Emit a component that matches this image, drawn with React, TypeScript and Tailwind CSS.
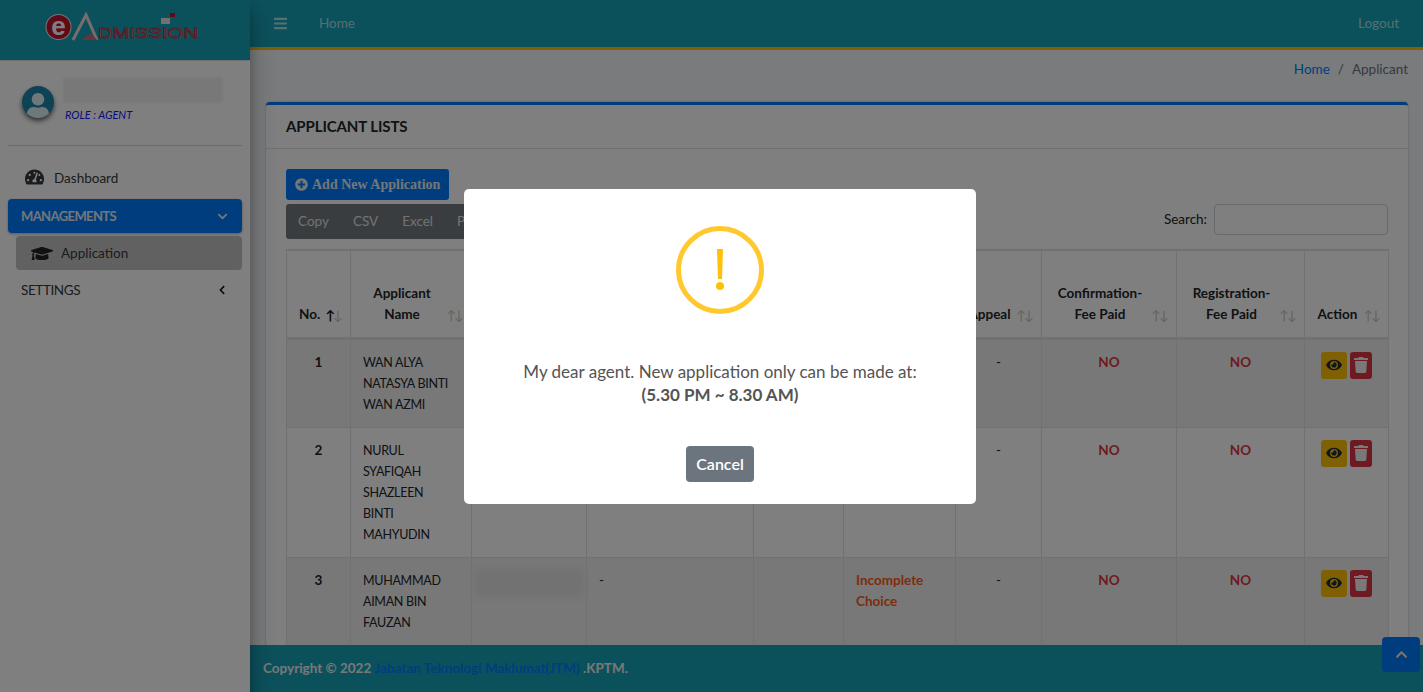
import { FaBars, FaChevronDown, FaChevronLeft, FaChevronUp, FaEye, FaGraduationCap, FaPlusCircle, FaTachometerAlt, FaTrash, FaUser } from "react-icons/fa";

const columns = [64, 121, 115, 167, 90, 112, 86, 135, 128, 84];

const applicants = [
    { no: 1, name: ["WAN ALYA", "NATASYA BINTI", "WAN AZMI"], striped: true, showHidden: false },
    { no: 2, name: ["NURUL", "SYAFIQAH", "SHAZLEEN", "BINTI", "MAHYUDIN"], striped: false, showHidden: false },
    { no: 3, name: ["MUHAMMAD", "AIMAN BIN", "FAUZAN"], striped: true, showHidden: true },
];

const SortArrows = ({ active }: { active?: boolean }) => (
    <span className="absolute right-[7px] bottom-[11px] flex text-[13px] leading-[21px] font-normal text-[#c4c4c4]">
        <span className={active ? "text-[#111] font-bold" : ""}>↑</span>
        <span className="-ml-[2px]">↓</span>
    </span>
);

const Th = ({ lines, active }: { lines: string[]; active?: boolean }) => (
    <th className="relative h-[88px] border border-[#dee2e6] pl-3 pr-[30px] pb-3 align-bottom text-center text-[13.5px] font-bold whitespace-nowrap text-[#212529]">
        {lines.map((line) => (
            <div key={line}>{line}</div>
        ))}
        <SortArrows active={active} />
    </th>
);

const Logo = () => (
    <svg width="180" height="45" viewBox="0 0 180 45" className="mt-[5px]">
        <circle cx="23.5" cy="22" r="13" fill="#f4e6e8" />
        <circle cx="23.5" cy="22" r="12" fill="#c4122f" />
        <text x="23.5" y="30" textAnchor="middle" fontFamily="Liberation Sans, sans-serif" fontWeight="700" fontSize="26" fill="#fff">e</text>
        <path d="M38 35 L51 10 L62 35" fill="none" stroke="#f3d9dc" strokeWidth="3" />
        <path d="M46 35 L56 28 L62 35" fill="#c86a76" />
        <text x="63" y="33" fontFamily="Liberation Sans, sans-serif" fontSize="15" textLength="100" lengthAdjust="spacingAndGlyphs" fill="#f0ccd1" stroke="#a43346" strokeWidth="0.9">DMISSION</text>
        <rect x="126" y="13" width="9" height="6" fill="#e3e3e3" />
        <rect x="135" y="8" width="5" height="4" fill="#c4122f" />
    </svg>
);

const App = () => {
    return (
        <div className="relative flex h-screen w-full overflow-hidden bg-[#f4f6f9] text-[13.5px] leading-[21px] text-[#212529] font-['Lato','Open_Sans',sans-serif]">
            <aside className="z-10 flex h-full w-[250px] shrink-0 flex-col bg-white shadow-[0_14px_28px_rgba(0,0,0,0.25),0_10px_10px_rgba(0,0,0,0.22)]">
                <div className="flex h-[61px] shrink-0 justify-center border-b border-[#dee2e6] bg-[#17a2b8]">
                    <Logo />
                </div>
                <div className="mx-2 flex h-[85px] shrink-0 gap-[9px] border-b border-[#d6d6d6] pl-[14px] pt-[25px]">
                    <div className="flex h-[32px] w-[32px] items-end justify-center overflow-hidden rounded-full bg-[#1c86ad] text-[#dff3f8] shadow-[0_3px_5px_rgba(0,0,0,0.6)]">
                        <FaUser className="h-[25px] w-[22px]" />
                    </div>
                    <div className="-mt-[9px]">
                        <div className="h-[26px] w-[160px] bg-[#f1f1f1] blur-[1px]" />
                        <div className="ml-[2px] mt-[2px] text-[11px] italic leading-[20px] text-[#1414ff]">ROLE : AGENT</div>
                    </div>
                </div>
                <nav className="flex flex-col px-2">
                    <div className="mt-[17px] flex h-[34px] items-center pl-[17px] -translate-y-[2px] text-[#343a40]">
                        <FaTachometerAlt className="mr-[10px] h-[18px] w-[19px] -translate-y-[1px]" />
                        Dashboard
                    </div>
                    <div className="mt-[2px] flex h-[34px] items-center justify-between rounded bg-[#007bff] pl-[13px] pr-[14px] text-[13px] font-bold tracking-[-0.6px] text-[#e9ecef] shadow-[0_1px_3px_rgba(0,0,0,0.3)]">
                        MANAGEMENTS
                        <FaChevronDown className="h-[11px] w-[11px]" />
                    </div>
                    <div className="ml-2 mt-[3px] flex h-[34px] items-center rounded bg-[#c2c2c2] pl-[15px] text-[#343a40]">
                        <FaGraduationCap className="mr-[8px] h-[19px] w-[22px] text-[#222]" />
                        Application
                    </div>
                    <div className="mt-[3px] flex h-[34px] items-center justify-between pl-[13px] pr-[15px] tracking-[-0.4px] text-[#343a40]">
                        SETTINGS
                        <FaChevronLeft className="h-[10px] w-[10px] text-[#111]" />
                    </div>
                </nav>
            </aside>

            <div className="flex h-full min-w-0 flex-1 flex-col">
                <header className="flex h-[50px] shrink-0 items-center border-b-[3px] border-[#ffc107] bg-[#17a2b8] pl-[24px] pr-[24px] text-[rgba(255,255,255,0.65)]">
                    <FaBars className="h-[15px] w-[13px]" />
                    <span className="ml-[32px]">Home</span>
                    <span className="ml-auto">Logout</span>
                </header>

                <main className="min-h-0 flex-1 overflow-hidden pl-[16px] pr-[15px]">
                    <div className="flex h-[52px] items-center justify-end pb-[14px]">
                        <span className="text-[#007bff]">Home</span>
                        <span className="mx-2 text-[#6c757d]">/</span>
                        <span className="text-[#6c757d]">Applicant</span>
                    </div>
                    <section className="rounded border-t-[3px] border-[#007bff] bg-white shadow-[0_0_2px_rgba(0,0,0,0.3)]">
                        <div className="flex h-[44px] items-center border-b border-[#dee2e6] pl-5">
                            <h3 className="text-[15px] font-bold tracking-[-0.1px] text-[#212529]">APPLICANT LISTS</h3>
                        </div>
                        <div className="px-5 pt-5">
                            <button className="flex h-[31px] w-[163px] items-center gap-[4px] rounded-[3px] bg-[#007bff] pl-[9px] font-['Liberation_Serif',serif] text-[14px] font-bold text-[#e9ecef]">
                                <FaPlusCircle className="h-[13px] w-[13px]" />
                                Add New Application
                            </button>
                            <div className="mt-[4px] flex items-start justify-between">
                                <div className="flex h-[35px] items-center rounded-[3px] bg-[#757a80] px-[12px] pb-[1px] text-[#e4e4e4] gap-[24px]">
                                    <span>Copy</span>
                                    <span>CSV</span>
                                    <span>Excel</span>
                                    <span>PDF</span>
                                    <span>Print</span>
                                </div>
                                <label className="flex items-center gap-[7px] text-[#212529]">
                                    Search:
                                    <input className="h-[31px] w-[174px] rounded border border-[#ced4da] bg-white" />
                                </label>
                            </div>
                            <table className="mt-[10px] w-[1102px] table-fixed border-collapse border-t-2 border-[#dee2e6]">
                                <colgroup>
                                    {columns.map((width, i) => (
                                        <col key={i} style={{ width }} />
                                    ))}
                                </colgroup>
                                <thead className="border-b-[3px] border-[#dee2e6]">
                                    <tr>
                                        <Th lines={["No."]} active />
                                        <Th lines={["Applicant", "Name"]} />
                                        <Th lines={["IC No."]} />
                                        <Th lines={["Programme"]} />
                                        <Th lines={["Intake"]} />
                                        <Th lines={["Status"]} />
                                        <Th lines={["Appeal"]} />
                                        <Th lines={["Confirmation-", "Fee Paid"]} />
                                        <Th lines={["Registration-", "Fee Paid"]} />
                                        <Th lines={["Action"]} />
                                    </tr>
                                </thead>
                                <tbody>
                                    {applicants.map((item) => (
                                        <tr key={item.no} className={item.striped ? "bg-[#f0f0f0]" : "bg-white"}>
                                            <td className="border border-[#dee2e6] p-3 text-center align-top font-bold">{item.no}</td>
                                            <td className="border border-[#dee2e6] p-3 align-top text-[12.5px] tracking-[-0.3px] whitespace-nowrap">
                                                {item.name.map((line) => (
                                                    <div key={line}>{line}</div>
                                                ))}
                                            </td>
                                            <td className="border border-[#dee2e6] align-top">
                                                {item.showHidden && <div className="mx-[3px] mt-[11px] h-[28px] bg-[#e4e4e4] blur-[3px]" />}
                                            </td>
                                            <td className="border border-[#dee2e6] p-3 align-top">{item.showHidden && "-"}</td>
                                            <td className="border border-[#dee2e6] p-3 align-top"></td>
                                            <td className="border border-[#dee2e6] p-3 align-top font-bold text-[#fd5a14]">
                                                {item.showHidden && "Incomplete Choice"}
                                            </td>
                                            <td className="border border-[#dee2e6] p-3 text-center align-top">-</td>
                                            <td className="border border-[#dee2e6] p-3 text-center align-top font-bold text-[#dc3545]">NO</td>
                                            <td className="border border-[#dee2e6] p-3 text-center align-top font-bold text-[#dc3545]">NO</td>
                                            <td className="border border-[#dee2e6] pt-[12px] align-top">
                                                <div className="flex justify-center gap-[3px] pr-[1px]">
                                                    <button className="flex h-[27px] w-[26px] items-center justify-center rounded-[3px] bg-[#ffc107] text-[#1f2d3d]">
                                                        <FaEye className="h-[14px] w-[16px]" />
                                                    </button>
                                                    <button className="flex h-[27px] w-[22px] items-center justify-center rounded-[3px] bg-[#dc3545] text-[#f3f3f3]">
                                                        <FaTrash className="h-[16px] w-[14px]" />
                                                    </button>
                                                </div>
                                            </td>
                                        </tr>
                                    ))}
                                </tbody>
                            </table>
                        </div>
                    </section>
                </main>

                <footer className="flex h-[47px] shrink-0 items-center bg-[#17a2b8] pl-[13px] font-bold text-[#f0f0f0]">
                    Copyright © 2022&nbsp;<span className="text-[#007bff]">Jabatan Teknologi Maklumat(JTM)</span>&nbsp;.KPTM.
                </footer>
            </div>

            <button className="absolute bottom-[20px] right-[3px] z-10 flex h-[35px] w-[38px] items-center justify-center rounded bg-[#007bff] text-[#e9ecef]">
                <FaChevronUp className="h-[13px] w-[13px]" />
            </button>

            <div className="fixed inset-0 z-20 flex items-center justify-center bg-black/50 pl-[17px]">
                <div className="flex h-[315px] w-[512px] flex-col items-center rounded-[5px] bg-white pt-[37px]">
                    <div className="flex h-[88px] w-[88px] items-center justify-center rounded-full border-[5px] border-[#ffc82c] text-[#ffc107]">
                        <svg width="10" height="41" viewBox="0 0 10 41">
                            <path d="M2 0 H8 L7 30 H3 Z" fill="currentColor" />
                            <circle cx="5" cy="37" r="4" fill="currentColor" />
                        </svg>
                    </div>
                    <p className="mt-[46px] text-center text-[17px] leading-[23px] text-[#545454]">
                        My dear agent. New application only can be made at:
                        <br />
                        <b>(5.30 PM ~ 8.30 AM)</b>
                    </p>
                    <button className="mt-[40px] h-[36px] w-[68px] rounded bg-[#6c757d] text-[16px] font-semibold text-white">Cancel</button>
                </div>
            </div>
        </div>
    );
};

export default App;
